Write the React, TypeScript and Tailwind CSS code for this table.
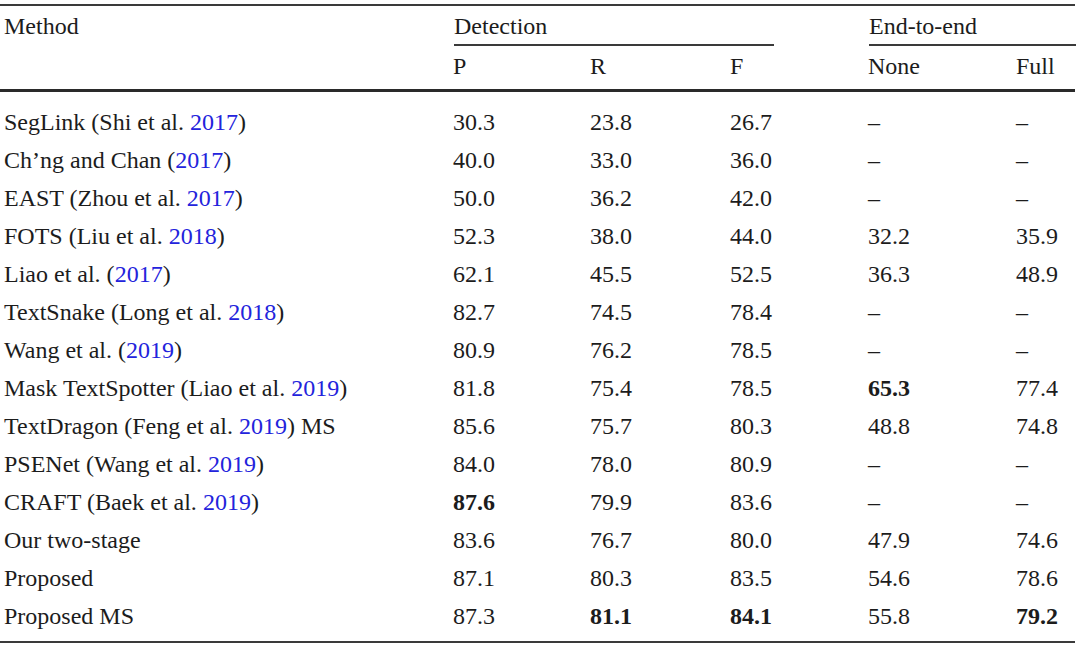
const cols = "grid grid-cols-[453px_137px_140px_138px_148px_60px]";

type Cell = string | { v: string; b: boolean };

type Row = {
  name: [string, string?, string?];
  vals: Cell[];
};

const rows: Row[] = [
  { name: ["SegLink (Shi et al. ", "2017", ")"], vals: ["30.3", "23.8", "26.7", "–", "–"] },
  { name: ["Ch’ng and Chan (", "2017", ")"], vals: ["40.0", "33.0", "36.0", "–", "–"] },
  { name: ["EAST (Zhou et al. ", "2017", ")"], vals: ["50.0", "36.2", "42.0", "–", "–"] },
  { name: ["FOTS (Liu et al. ", "2018", ")"], vals: ["52.3", "38.0", "44.0", "32.2", "35.9"] },
  { name: ["Liao et al. (", "2017", ")"], vals: ["62.1", "45.5", "52.5", "36.3", "48.9"] },
  { name: ["TextSnake (Long et al. ", "2018", ")"], vals: ["82.7", "74.5", "78.4", "–", "–"] },
  { name: ["Wang et al. (", "2019", ")"], vals: ["80.9", "76.2", "78.5", "–", "–"] },
  { name: ["Mask TextSpotter (Liao et al. ", "2019", ")"], vals: ["81.8", "75.4", "78.5", { v: "65.3", b: true }, "77.4"] },
  { name: ["TextDragon (Feng et al. ", "2019", ") MS"], vals: ["85.6", "75.7", "80.3", "48.8", "74.8"] },
  { name: ["PSENet (Wang et al. ", "2019", ")"], vals: ["84.0", "78.0", "80.9", "–", "–"] },
  { name: ["CRAFT (Baek et al. ", "2019", ")"], vals: [{ v: "87.6", b: true }, "79.9", "83.6", "–", "–"] },
  { name: ["Our two-stage"], vals: ["83.6", "76.7", "80.0", "47.9", "74.6"] },
  { name: ["Proposed"], vals: ["87.1", "80.3", "83.5", "54.6", "78.6"] },
  { name: ["Proposed MS"], vals: ["87.3", { v: "81.1", b: true }, { v: "84.1", b: true }, "55.8", { v: "79.2", b: true }] },
];

function Val({ c }: { c: Cell }) {
  if (typeof c === "string") return <div>{c}</div>;
  return <div className={c.b ? "font-bold" : ""}>{c.v}</div>;
}

export default function App() {
  return (
    <div className="w-[1080px] h-[647px] bg-white text-[#1c1c1c] text-[24px] leading-none overflow-hidden" style={{ fontFamily: '"Liberation Serif", "Times New Roman", serif' }}>
      <div className="pt-[4px] w-[1075px]">
        <div className="h-[2px] bg-[#3a3a3a]" />
        {/* header row 1 */}
        <div className={`${cols} h-[40px] pl-[4px]`}>
          <div className="pt-[8px]">Method</div>
          <div className="col-span-3 -ml-[4px] pl-[1px] pt-[8px]">
            <div className="w-[320px] border-b-[2px] border-[#3a3a3a] pb-[6px]">Detection</div>
          </div>
          <div className="col-span-2 -ml-[4px] pl-[1px] pt-[8px]">
            <div className="w-[207px] border-b-[2px] border-[#3a3a3a] pb-[6px]">End-to-end</div>
          </div>
        </div>
        {/* header row 2 */}
        <div className={`${cols} h-[43px] items-center pb-[3px]`}>
          <div />
          <div>P</div>
          <div>R</div>
          <div>F</div>
          <div>None</div>
          <div>Full</div>
        </div>
        <div className="h-[3px] bg-[#2a2a2a]" />
        <div className="pt-[11px] pb-[6px]">
          {rows.map((r, i) => (
            <div key={i} className={`${cols} h-[38px] items-center`}>
              <div className="pl-[4px]">
                {r.name[0]}
                {r.name[1] && <span className="text-[#2323dc]">{r.name[1]}</span>}
                {r.name[2]}
              </div>
              {r.vals.map((c, j) => (
                <Val key={j} c={c} />
              ))}
            </div>
          ))}
        </div>
        <div className="h-[2px] bg-[#3a3a3a]" />
      </div>
    </div>
  );
}
